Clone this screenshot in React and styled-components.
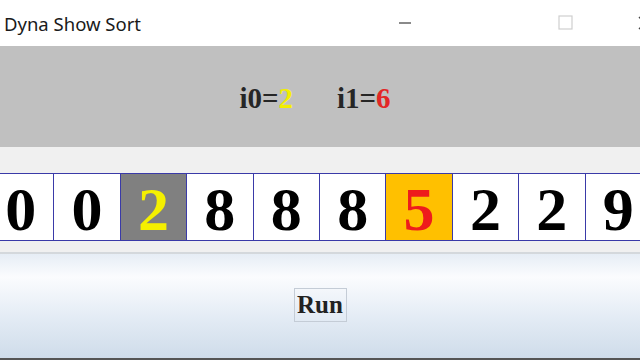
import React from 'react';
import styled, { createGlobalStyle } from 'styled-components';

const Global = createGlobalStyle`
  html, body { margin: 0; padding: 0; background: #fff; }
  body { width: 640px; height: 360px; overflow: hidden; }
`;

const Window = styled.div`
  width: 640px;
  height: 360px;
  display: flex;
  flex-direction: column;
  overflow: hidden;
  background: #fff;
`;

const TitleBar = styled.div`
  height: 46px;
  flex: none;
  display: flex;
  align-items: center;
  background: #fff;
`;

const Title = styled.div`
  flex: 1;
  padding-left: 4px;
  font-family: "Noto Sans", "Open Sans", sans-serif;
  font-size: 18.5px;
  color: #1a1a1a;
`;

const Controls = styled.div`
  display: flex;
  align-items: center;
  margin-right: -15px;
`;

const Ctrl = styled.div`
  width: 20px;
  height: 46px;
  margin-left: ${p => p.gap || 0}px;
  display: flex;
  align-items: center;
  justify-content: center;
`;

const InfoPanel = styled.div`
  height: 101px;
  flex: none;
  background: #c0c0c0;
  display: flex;
  align-items: center;
  justify-content: center;
  gap: 44px;
  padding-right: 10px;
  padding-top: 4px;
  box-sizing: border-box;
  font-family: "Liberation Serif", "DejaVu Serif", serif;
  font-weight: bold;
  font-size: 29px;
  color: #262626;
`;

const Var = styled.span``;

const Val = styled.span`
  color: ${p => p.c};
`;

const Strip = styled.div`
  height: ${p => p.h}px;
  flex: none;
  background: #f0f0f0;
  border-bottom: ${p => (p.line ? '2px solid #d4d8dc' : 'none')};
`;

const CellRow = styled.div`
  display: flex;
  flex: none;
  height: 68px;
  margin-left: -13px;
  background: #fff;
`;

const Cell = styled.div`
  width: 66.4px;
  flex: none;
  box-sizing: border-box;
  border-top: 1px solid #3a3aa8;
  border-bottom: 1px solid #3a3aa8;
  border-left: 1.5px solid #3a3aa8;
  background: ${p => p.bg};
  color: ${p => p.fg};
  display: flex;
  align-items: center;
  justify-content: center;
  font-family: "Liberation Serif", "DejaVu Serif", serif;
  font-weight: bold;
  font-size: 62px;
  line-height: 1;
  padding-top: 4px;
`;

const Footer = styled.div`
  flex: 1;
  display: flex;
  justify-content: center;
  align-items: flex-start;
  padding-top: 34px;
  background: linear-gradient(180deg, #e6edf5 0%, #fbfcfe 22%, #e4ecf5 60%, #cfdcea 100%);
  border-bottom: 2px solid #555;
`;

const RunButton = styled.button`
  width: 53px;
  height: 34px;
  padding: 0;
  border: 1px solid #c4ccd6;
  background: transparent;
  font-family: "Liberation Serif", "DejaVu Serif", serif;
  font-weight: bold;
  font-size: 25px;
  color: #222;
  cursor: pointer;
`;

const values = [0, 0, 2, 8, 8, 8, 5, 2, 2, 9];

function cellStyle(i) {
  if (i === 2) return { bg: '#808080', fg: '#f5f000' };
  if (i === 6) return { bg: '#ffc000', fg: '#ee1c1c' };
  return { bg: '#fff', fg: '#000' };
}

export default function App() {
  return (
    <Window>
      <Global />
      <TitleBar>
        <Title>Dyna Show Sort</Title>
        <Controls>
          <Ctrl>
            <svg width="12" height="4" viewBox="0 0 12 4">
              <rect x="0" y="1" width="12" height="2" fill="#8a8a8a" />
            </svg>
          </Ctrl>
          <Ctrl gap={141}>
            <svg width="16" height="16" viewBox="0 0 16 16">
              <rect x="1" y="1" width="13" height="13" fill="none" stroke="#cfcfcf" strokeWidth="1.2" />
            </svg>
          </Ctrl>
          <Ctrl gap={59}>
            <svg width="16" height="16" viewBox="0 0 16 16">
              <path d="M2 2 L14 14 M14 2 L2 14" stroke="#444" strokeWidth="1.4" />
            </svg>
          </Ctrl>
        </Controls>
      </TitleBar>
      <InfoPanel>
        <Var>i0=<Val c="#f2ee00">2</Val></Var>
        <Var>i1=<Val c="#e22626">6</Val></Var>
      </InfoPanel>
      <Strip h={26} />
      <CellRow>
        {values.map((v, i) => {
          const s = cellStyle(i);
          return (
            <Cell key={i} bg={s.bg} fg={s.fg}>
              {v}
            </Cell>
          );
        })}
      </CellRow>
      <Strip h={11} line />
      <Footer>
        <RunButton>Run</RunButton>
      </Footer>
    </Window>
  );
}
